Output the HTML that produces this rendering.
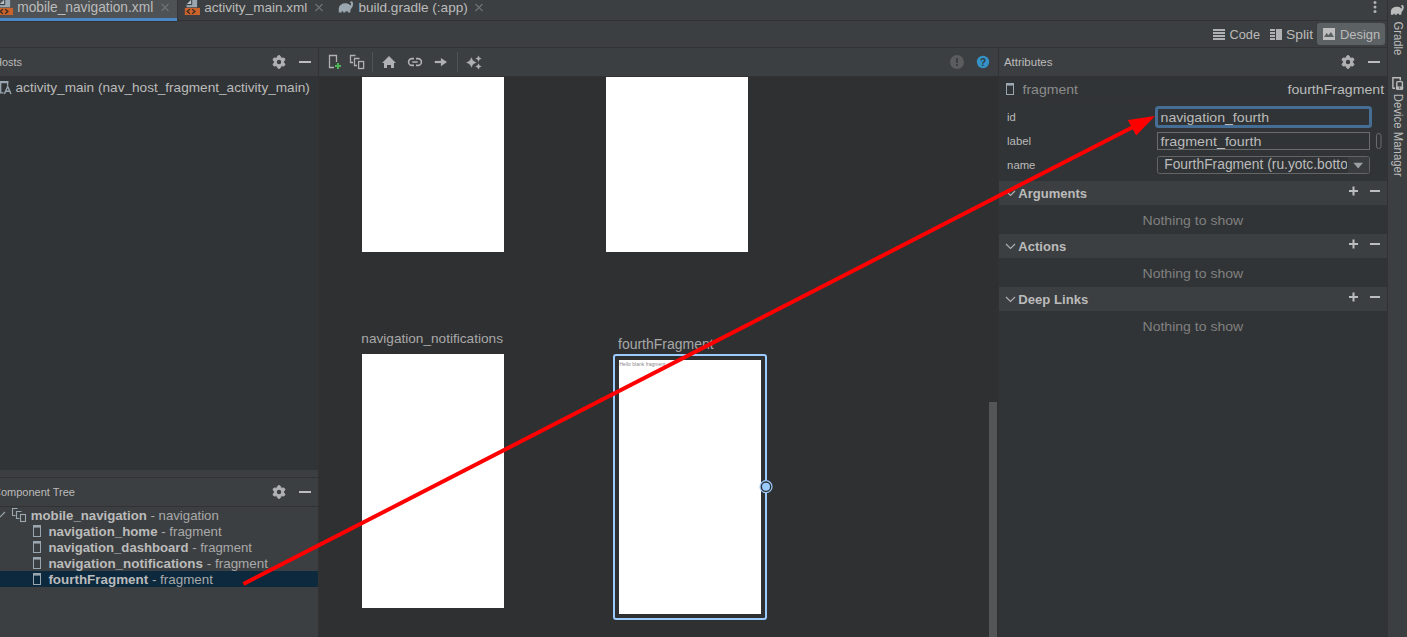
<!DOCTYPE html>
<html><head><meta charset="utf-8">
<style>
*{margin:0;padding:0}
html,body{width:1407px;height:637px;overflow:hidden;background:#3c3f41}
svg{position:absolute;left:0;top:0;display:block}
text{font-family:"Liberation Sans",sans-serif;white-space:pre}
.p{fill:#bbbbbb}
.b{font-weight:bold}
.i{fill:#afb1b3}
.is{fill:none;stroke:#afb1b3}
.ib{fill:none;stroke:#9aa7b0}
</style></head><body>
<svg width="1407" height="637" viewBox="0 0 1407 637">
<!-- ===== backgrounds ===== -->
<rect x="0" y="0" width="1407" height="637" fill="#3c3f41"/>
<rect x="0" y="0" width="177" height="18" fill="#4e5254"/>
<rect x="0" y="18" width="177" height="3" fill="#4a88c7"/>
<rect x="0" y="21" width="177" height="1" fill="#323232"/>
<rect x="177" y="20" width="1210" height="1" fill="#323232"/>
<rect x="177" y="0" width="1" height="21" fill="#363636"/>
<rect x="0" y="47" width="1387" height="1" fill="#323232"/>
<!-- design toggle -->
<rect x="1317" y="23" width="68" height="22" rx="3" fill="#5c6164"/>

<!-- left panel -->
<rect x="0" y="76" width="318" height="1" fill="#323232"/>
<rect x="0" y="77" width="318" height="393" fill="#313436"/>
<rect x="0" y="477" width="318" height="1" fill="#323232"/>
<rect x="0" y="506" width="318" height="1" fill="#323232"/>
<rect x="0" y="571" width="318" height="16" fill="#0d293e"/>
<rect x="318" y="48" width="1" height="589" fill="#323232"/>

<!-- canvas -->
<rect x="319" y="76" width="679" height="1" fill="#323232"/>
<rect x="319" y="77" width="679" height="560" fill="#2f3032"/>
<rect x="989" y="402" width="8" height="235" fill="#545556"/>
<rect x="998" y="48" width="1" height="589" fill="#323232"/>

<!-- attributes -->
<rect x="999" y="76" width="388" height="1" fill="#323232"/>
<rect x="999" y="77" width="388" height="560" fill="#313436"/>
<rect x="999" y="100" width="388" height="1" fill="#343232"/>
<rect x="999" y="181" width="388" height="24" fill="#3c3f41"/>
<rect x="999" y="234" width="388" height="24" fill="#3c3f41"/>
<rect x="999" y="287" width="388" height="24" fill="#3c3f41"/>
<rect x="1387" y="0" width="1" height="637" fill="#323232"/>

<!-- ===== tab bar ===== -->
<!-- xml icon tab1 -->
<use href="#xmlic" transform="translate(-187,0)"/>
<text x="17.2" y="11.8" font-size="13.75" class="p" textLength="136" lengthAdjust="spacingAndGlyphs">mobile_navigation.xml</text>
<path d="M161.5 4L168.5 11M168.5 4L161.5 11" stroke="#6f7274" stroke-width="1.2"/>
<!-- xml icon tab2 -->
<g id="xmlic">
<path d="M186.6 4.5L191.1 0H197.1V7.2H186.6Z" fill="#9aa7b0"/><path d="M186.8 4.6H191.7V0" fill="none" stroke="#2e3032" stroke-width="1"/><path d="M187.1 4.1L191.1 0V4.1Z" fill="#b8c2c8"/>
<rect x="184.8" y="7.9" width="15.2" height="7.1" fill="#c9622b"/>
<path d="M189.9 9.3L187.2 11.5L189.9 13.7M192.2 9.3L194.9 11.5L192.2 13.7" fill="none" stroke="#3b2b22" stroke-width="1.3"/>
</g>
<text x="204.2" y="11.7" font-size="13.56" class="p" textLength="103.2" lengthAdjust="spacingAndGlyphs">activity_main.xml</text>
<path d="M315.5 4L322.5 11M322.5 4L315.5 11" stroke="#6f7274" stroke-width="1.2"/>
<!-- gradle elephant -->
<path id="ele" transform="translate(338.8,1)" d="M0 11.5V7Q0.5 4 2.5 3.5Q4 2 7.5 2.3Q10.5 2.5 11.6 4.5Q12.6 3.5 12.2 2L11 1.8Q11.5 0 13 0.2Q14.5 1 14.3 3.5Q14 6.5 11.8 8.5L11.5 11.5H9V10.3H6.8L6.5 11.5H4.3V10.3H2.8V11.5Z" fill="#9aa7b0"/>
<text x="358.4" y="11.7" font-size="13.57" class="p" textLength="109.4" lengthAdjust="spacingAndGlyphs">build.gradle (:app)</text>
<path d="M475.5 4L482.5 11M482.5 4L475.5 11" stroke="#6f7274" stroke-width="1.2"/>
<!-- kebab -->
<circle cx="1375" cy="2.5" r="1.5" class="i"/>
<circle cx="1375" cy="7" r="1.5" class="i"/>
<circle cx="1375" cy="11.5" r="1.5" class="i"/>

<!-- ===== code/split/design ===== -->
<rect x="1213" y="29" width="12" height="2" class="i"/>
<rect x="1213" y="32" width="12" height="2" class="i"/>
<rect x="1213" y="35" width="12" height="2" class="i"/>
<rect x="1213" y="38" width="12" height="2" class="i"/>
<text x="1229.6" y="38.9" font-size="13.3" class="p" textLength="30.4" lengthAdjust="spacingAndGlyphs">Code</text>
<rect x="1270" y="29" width="5" height="2" class="i"/>
<rect x="1270" y="32" width="5" height="2" class="i"/>
<rect x="1270" y="35" width="5" height="2" class="i"/>
<rect x="1270" y="38" width="5" height="2" class="i"/>
<rect x="1276" y="29" width="6" height="11" class="i"/>
<text x="1286" y="38.9" font-size="13.3" class="p" textLength="27" lengthAdjust="spacingAndGlyphs">Split</text>
<rect x="1323" y="28" width="12" height="12" fill="#bdbdbd"/>
<path d="M1324 37L1326.5 33L1328.5 35L1331 32L1334 37Z" fill="#5c6164"/>
<text x="1339.9" y="38.8" font-size="13.3" class="p" textLength="40.3" lengthAdjust="spacingAndGlyphs">Design</text>

<!-- ===== left panel content ===== -->
<text x="-5.8" y="65.7" font-size="11.53" class="p" textLength="27.6" lengthAdjust="spacingAndGlyphs">Hosts</text>
<g id="gear">
<path d="M278.11 55.66 L279.89 55.66 L280.91 57.71 L281.76 58.20 L284.04 58.06 L284.93 59.60 L283.67 61.51 L283.67 62.49 L284.93 64.40 L284.04 65.94 L281.76 65.80 L280.91 66.29 L279.89 68.34 L278.11 68.34 L277.09 66.29 L276.24 65.80 L273.96 65.94 L273.07 64.40 L274.33 62.49 L274.33 61.51 L273.07 59.60 L273.96 58.06 L276.24 58.20 L277.09 57.71Z" fill="#afb1b3" stroke="#afb1b3" stroke-width="1" stroke-linejoin="round"/>
<circle cx="279" cy="62" r="2.2" fill="#3c3f41"/>
</g>
<rect x="299" y="61" width="12" height="2" fill="#bbbdbf"/>
<!-- host row icon -->
<path d="M0.7 81V92.8H3.5M7.6 81V85.5" fill="none" stroke="#9aa7b0" stroke-width="1.3"/>
<rect x="0" y="81" width="8.3" height="2.2" fill="#9aa7b0"/>
<path d="M4.4 94L7.7 86.4L11 94M5.6 91.3H9.8" fill="none" stroke="#9aa7b0" stroke-width="1.4"/>
<text x="15.5" y="91.6" font-size="13.61" class="p" textLength="294.3" lengthAdjust="spacingAndGlyphs">activity_main (nav_host_fragment_activity_main)</text>

<!-- component tree -->
<text x="-7" y="495.7" font-size="11.53" class="p" textLength="82" lengthAdjust="spacingAndGlyphs">Component Tree</text>
<use href="#gear" transform="translate(0,430)"/>
<rect x="299" y="491" width="12" height="2" fill="#bbbdbf"/>
<path d="M-5 512L0 517L5 512" fill="none" stroke="#9aa7b0" stroke-width="1.2"/>
<path d="M17.5 508.5H12.5V515.5H15.5M21.5 511.5H16.5V518.5H19.5" fill="none" stroke="#9aa7b0" stroke-width="1.1"/>
<rect x="20.5" y="514.5" width="5" height="7" fill="none" stroke="#9aa7b0" stroke-width="1.1"/>
<text x="30.8" y="519.6" font-size="13.14" class="p b" textLength="188" lengthAdjust="spacingAndGlyphs">mobile_navigation<tspan font-weight="normal" fill="#a9a9a9"> - navigation</tspan></text>
<g id="frag">
<rect x="33.5" y="525.5" width="7" height="11" fill="none" stroke="#9aa7b0" stroke-width="1"/>
<rect x="33" y="525" width="8" height="2.6" fill="#9aa7b0"/>
</g>
<text x="48.4" y="535.6" font-size="13.13" class="p b" textLength="173.3" lengthAdjust="spacingAndGlyphs">navigation_home<tspan font-weight="normal" fill="#a9a9a9"> - fragment</tspan></text>
<use href="#frag" transform="translate(0,16)"/>
<text x="48.4" y="551.6" font-size="13.0" class="p b" textLength="203.6" lengthAdjust="spacingAndGlyphs">navigation_dashboard<tspan font-weight="normal" fill="#a9a9a9"> - fragment</tspan></text>
<use href="#frag" transform="translate(0,32)"/>
<text x="48.4" y="567.6" font-size="13.3" class="p b" textLength="219.6" lengthAdjust="spacingAndGlyphs">navigation_notifications<tspan font-weight="normal" fill="#a9a9a9"> - fragment</tspan></text>
<use href="#frag" transform="translate(0,48)"/>
<text x="48.4" y="583.6" font-size="13.3" class="p b" textLength="164.6" lengthAdjust="spacingAndGlyphs">fourthFragment<tspan font-weight="normal" fill="#a9a9a9"> - fragment</tspan></text>

<!-- ===== canvas toolbar ===== -->
<path d="M336.5 62V55.5H329.5V67.5H334" fill="none" stroke="#afb1b3" stroke-width="1.3"/>
<path d="M338 63V69M335 66H341" stroke="#4fb453" stroke-width="2"/>
<path d="M355.5 55.5H350.5V62.5H353M359.5 58.5H354.5V65.5H357" fill="none" stroke="#afb1b3" stroke-width="1.3"/>
<rect x="358.6" y="61.5" width="5" height="7" fill="none" stroke="#afb1b3" stroke-width="1.3"/>
<rect x="372" y="52" width="1" height="20" fill="#515456"/>
<path d="M389 56L396 63H394V68H391V65H387V68H384V63H382Z" fill="#afb1b3"/>
<path d="M414 58.6H412A3.4 3.4 0 0 0 412 65.4H414M416 58.6H418A3.4 3.4 0 0 1 418 65.4H416M412.3 62H417.7" fill="none" stroke="#afb1b3" stroke-width="1.6"/>
<path d="M434.8 62H441.5" stroke="#afb1b3" stroke-width="2.2"/><path d="M440.9 57.9L447 62L440.9 66.2Z" fill="#afb1b3"/>
<rect x="457" y="52" width="1" height="20" fill="#515456"/>
<path d="M471.4 57.6Q472.3 61.6 476.3 62.5Q472.3 63.4 471.4 67.4Q470.5 63.4 466.5 62.5Q470.5 61.6 471.4 57.6Z" fill="#afb1b3" stroke="#afb1b3" stroke-width="0.3"/>
<path d="M478.50 55.80Q478.85 58.25 481.30 58.60Q478.85 58.95 478.50 61.40Q478.15 58.95 475.70 58.60Q478.15 58.25 478.50 55.80Z M478.50 63.60Q478.85 66.05 481.30 66.40Q478.85 66.75 478.50 69.20Q478.15 66.75 475.70 66.40Q478.15 66.05 478.50 63.60Z" fill="#afb1b3" stroke="#afb1b3" stroke-width="0.3"/>
<circle cx="957" cy="62" r="7" fill="#5a5c5e"/>
<rect x="956" y="58" width="2" height="5" fill="#3c3f41"/>
<rect x="956" y="64" width="2" height="2" fill="#3c3f41"/>
<circle cx="983" cy="62" r="6.2" fill="#3592c4"/>
<text x="983" y="66" font-size="10" font-weight="bold" fill="#2b3a44" text-anchor="middle">?</text>

<!-- ===== canvas content ===== -->
<rect x="362" y="77" width="142" height="175" fill="#ffffff"/>
<rect x="606" y="77" width="142" height="175" fill="#ffffff"/>
<text x="361.3" y="343.2" font-size="13.63" fill="#a8a8a8" textLength="141.7" lengthAdjust="spacingAndGlyphs">navigation_notifications</text>
<rect x="362" y="354" width="142" height="254" fill="#ffffff"/>
<text x="618" y="348.7" font-size="13.98" fill="#a8a8a8" textLength="95.6" lengthAdjust="spacingAndGlyphs">fourthFragment</text>
<rect x="614" y="355" width="152" height="264" rx="2" fill="none" stroke="#9ccbff" stroke-width="2"/>
<rect x="619" y="360" width="142" height="254" fill="#ffffff"/>
<text x="619.5" y="365.5" font-size="5" fill="#8a8a8a">Hello blank fragment</text>
<circle cx="766" cy="486.7" r="6" fill="#2f3032" stroke="#9ccbff" stroke-width="1.2"/>
<circle cx="766" cy="486.7" r="4" fill="#9ccbff"/>

<!-- ===== attributes ===== -->
<text x="1003.9" y="65.9" font-size="11.53" class="p">Attributes</text>
<use href="#gear" transform="translate(1069,0)"/>
<rect x="1368" y="61" width="12" height="2" fill="#bbbdbf"/>
<use href="#frag" transform="translate(973,-442)"/>
<text x="1022.5" y="93.5" font-size="13.5" fill="#8c8c8c" textLength="55.5" lengthAdjust="spacingAndGlyphs">fragment</text>
<text x="1287.5" y="93.8" font-size="13.5" class="p" textLength="96.6" lengthAdjust="spacingAndGlyphs">fourthFragment</text>
<text x="1007.1" y="120.9" font-size="11.3" class="p">id</text>
<text x="1007.1" y="144.6" font-size="11.3" class="p">label</text>
<text x="1007.1" y="169" font-size="11.3" class="p">name</text>
<!-- id field -->
<rect x="1156.5" y="107.5" width="214" height="19" rx="2" fill="none" stroke="#466d94" stroke-width="3"/>
<text x="1160.6" y="121.9" font-size="13.5" class="p" textLength="108.4" lengthAdjust="spacingAndGlyphs">navigation_fourth</text>
<!-- label field -->
<rect x="1157.5" y="132.5" width="212" height="17" fill="none" stroke="#6b6b6b" stroke-width="1"/>
<text x="1160.6" y="145.5" font-size="13.5" class="p" textLength="100.8" lengthAdjust="spacingAndGlyphs">fragment_fourth</text>
<rect x="1376.5" y="133.5" width="4.5" height="15" rx="2.2" fill="none" stroke="#6b6b6b" stroke-width="1"/>
<!-- name combo -->
<rect x="1157.5" y="156.5" width="212" height="17" rx="2" fill="none" stroke="#646464" stroke-width="1"/>
<svg x="1158" y="157" width="189" height="16"><text x="6.2" y="12.3" font-size="13.84" class="p">FourthFragment (ru.yotc.bottomnav)</text></svg>
<rect x="1348" y="157" width="21" height="16" fill="#3a3d3f"/>
<path d="M1353.4 162.8H1363L1358.2 168.4Z" fill="#9da0a2"/>

<!-- sections -->
<path d="M1006 191L1010.5 195.5L1015 191" fill="none" stroke="#afb1b3" stroke-width="1.1"/>
<text x="1018.3" y="197.5" font-size="13.02" class="p b">Arguments</text>
<path d="M1349 191H1358M1353.5 186.5V195.5" stroke="#bbbdbf" stroke-width="2"/>
<rect x="1370" y="190" width="10" height="2" fill="#bbbdbf"/>
<text x="1142.5" y="224.9" font-size="13.5" fill="#808080" textLength="100.7" lengthAdjust="spacingAndGlyphs">Nothing to show</text>

<path d="M1006 244L1010.5 248.5L1015 244" fill="none" stroke="#afb1b3" stroke-width="1.1"/>
<text x="1018.3" y="251" font-size="13.06" class="p b">Actions</text>
<path d="M1349 244H1358M1353.5 239.5V248.5" stroke="#bbbdbf" stroke-width="2"/>
<rect x="1370" y="243" width="10" height="2" fill="#bbbdbf"/>
<text x="1142.5" y="277.9" font-size="13.5" fill="#808080" textLength="100.7" lengthAdjust="spacingAndGlyphs">Nothing to show</text>

<path d="M1006 297L1010.5 301.5L1015 297" fill="none" stroke="#afb1b3" stroke-width="1.1"/>
<text x="1018.3" y="303.9" font-size="13.12" class="p b">Deep Links</text>
<path d="M1349 297H1358M1353.5 292.5V301.5" stroke="#bbbdbf" stroke-width="2"/>
<rect x="1370" y="296" width="10" height="2" fill="#bbbdbf"/>
<text x="1142.5" y="330.9" font-size="13.5" fill="#808080" textLength="100.7" lengthAdjust="spacingAndGlyphs">Nothing to show</text>

<!-- ===== right strip ===== -->
<path transform="translate(1390.9,4.8) scale(0.9,0.87)" d="M0 11.5V7Q0.5 4 2.5 3.5Q4 2 7.5 2.3Q10.5 2.5 11.6 4.5Q12.6 3.5 12.2 2L11 1.8Q11.5 0 13 0.2Q14.5 1 14.3 3.5Q14 6.5 11.8 8.5L11.5 11.5H9V10.3H6.8L6.5 11.5H4.3V10.3H2.8V11.5Z" fill="#bcbcbc"/>
<text transform="translate(1393.6,21.4) rotate(90)" font-size="12.3" class="p" textLength="34" lengthAdjust="spacingAndGlyphs">Gradle</text>
<path d="M1392.9 88.8V77.8H1400.3V80.6M1392.9 88.3H1395.2" fill="none" stroke="#bcbcbc" stroke-width="1.4"/>
<rect x="1396.8" y="81.6" width="5.6" height="7.4" rx="0.8" fill="none" stroke="#bcbcbc" stroke-width="1.4"/><rect x="1396.1" y="86.4" width="7" height="3.3" rx="0.8" fill="#bcbcbc"/><circle cx="1399.6" cy="88" r="0.7" fill="#3c3f41"/>
<text transform="translate(1393.6,93.7) rotate(90)" font-size="12.3" class="p" textLength="83" lengthAdjust="spacingAndGlyphs">Device Manager</text>

<!-- ===== red arrow ===== -->
<line x1="243.4" y1="584" x2="1133" y2="127" stroke="#ff0000" stroke-width="4"/>
<path d="M1155 116L1127.8 120L1136.2 135.6Z" fill="#ff0000"/>
</svg>
</body></html>
